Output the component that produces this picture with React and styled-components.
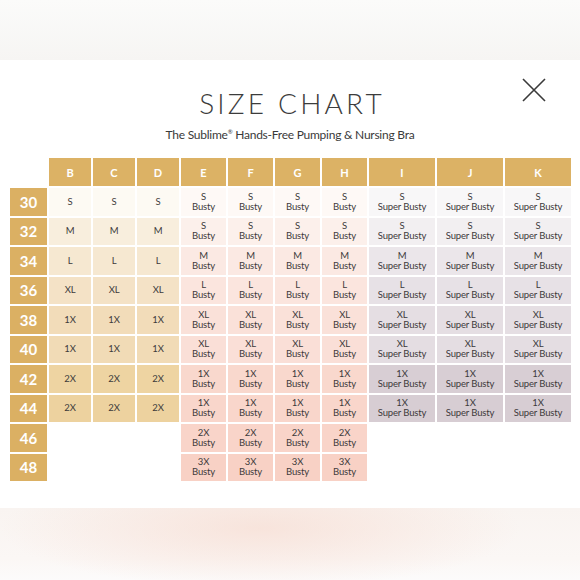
import React from "react";
import styled, { createGlobalStyle } from "styled-components";

const GlobalStyle = createGlobalStyle`
  html, body {
    margin: 0;
    padding: 0;
    background: #ffffff;
  }
  body {
    font-family: "Lato", "Open Sans", sans-serif;
  }
`;

const Page = styled.div`
  width: 580px;
  height: 580px;
  display: flex;
  flex-direction: column;
  overflow: hidden;
`;

const TopBand = styled.div`
  height: 60px;
  flex: none;
  background: linear-gradient(180deg, #fbfbfa 0%, #f6f5f3 100%);
`;

const BottomBand = styled.div`
  flex: 1;
  background:
    radial-gradient(ellipse 260px 60px at 260px 20px, rgba(247, 222, 212, 0.75), rgba(247, 222, 212, 0) 100%),
    linear-gradient(180deg, #f9f4f1 0%, #fbf7f5 70%, #fcfbfb 100%);
`;

const Panel = styled.div`
  position: relative;
  height: 448px;
  flex: none;
  background: #ffffff;
  display: flex;
  flex-direction: column;
  align-items: center;
  padding-top: 27px;
  box-sizing: border-box;
`;

const CloseButton = styled.button`
  position: absolute;
  top: 18px;
  right: 34px;
  width: 24px;
  height: 24px;
  padding: 0;
  border: none;
  background: none;
  cursor: pointer;
`;

const Title = styled.h1`
  margin: 0;
  font-family: "Lato", sans-serif;
  font-weight: 300;
  font-size: 28px;
  line-height: 32px;
  letter-spacing: 3.2px;
  color: #3c3c3c;
  padding-left: 4px;
`;

const Subtitle = styled.p`
  margin: 5px 0 0;
  font-family: "Lato", sans-serif;
  font-size: 12px;
  line-height: 16px;
  color: #3a3a3a;
  letter-spacing: -0.25px;

  sup {
    font-size: 6px;
    vertical-align: 5px;
  }
`;

const Grid = styled.div`
  margin-top: 15px;
  align-self: flex-start;
  margin-left: 10px;
  display: grid;
  grid-template-columns: 37px repeat(3, 42px) repeat(4, 45px) repeat(3, 66px);
  grid-template-rows: 28px repeat(10, 27.5px);
  gap: 2px;
`;

const Corner = styled.div``;

const HeadCell = styled.div`
  background: #dcb265;
  color: #ffffff;
  font-weight: 700;
  font-size: 11px;
  display: flex;
  align-items: center;
  justify-content: center;
`;

const RowLabel = styled.div`
  background: #dbb063;
  color: #ffffff;
  font-weight: 700;
  font-size: 15px;
  display: flex;
  align-items: center;
  justify-content: center;
`;

const Cell = styled.div`
  background: ${(p) => p.$bg};
  color: #3d3a3b;
  font-size: 9.5px;
  line-height: 10px;
  display: flex;
  flex-direction: column;
  align-items: center;
  justify-content: center;
  text-align: center;
  letter-spacing: -0.15px;
`;

const Empty = styled.div``;

const bands = [
  "30", "32", "34", "36", "38", "40", "42", "44", "46", "48",
];

const groups = [
  {
    cups: ["B", "C", "D"],
    sizes: ["S", "M", "L", "XL", "1X", "1X", "2X", "2X", null, null],
    label: null,
    colors: ["#fdfaf3", "#f8eedd", "#f6e8d1", "#f4e2c6", "#f2dcb9", "#f1dbb6", "#eed4a2", "#edd29f"],
  },
  {
    cups: ["E", "F", "G", "H"],
    sizes: ["S", "S", "M", "L", "XL", "XL", "1X", "1X", "2X", "3X"],
    label: "Busty",
    colors: ["#fef9f6", "#fcf0eb", "#fbe9e3", "#fbe5de", "#fae1d9", "#fadfd7", "#f9d8cd", "#f9d6cb", "#f9d4c9", "#f8d1c5"],
  },
  {
    cups: ["I", "J", "K"],
    sizes: ["S", "S", "M", "L", "XL", "XL", "1X", "1X", null, null],
    label: "Super Busty",
    colors: ["#f8f7f8", "#f2eff1", "#ebe6ea", "#e7e1e6", "#e5dee3", "#e4dde2", "#d8ced4", "#d7cdd3"],
  },
];

function CloseIcon() {
  return (
    <svg width="24" height="24" viewBox="0 0 24 24">
      <path d="M1 1 L23 23 M23 1 L1 23" stroke="#3a3a3a" strokeWidth="1.6" fill="none" />
    </svg>
  );
}

function SizeGrid() {
  return (
    <Grid>
      <Corner />
      {groups.map((g) => g.cups.map((c) => <HeadCell key={c}>{c}</HeadCell>))}
      {bands.map((band, r) => (
        <React.Fragment key={band}>
          <RowLabel>{band}</RowLabel>
          {groups.map((g) =>
            g.cups.map((c) => {
              const size = g.sizes[r];
              if (!size) return <Empty key={c} />;
              return (
                <Cell key={c} $bg={g.colors[r]}>
                  <span>{size}</span>
                  {g.label && <span>{g.label}</span>}
                </Cell>
              );
            })
          )}
        </React.Fragment>
      ))}
    </Grid>
  );
}

export default function App() {
  return (
    <>
      <GlobalStyle />
      <Page>
        <TopBand />
        <Panel>
          <CloseButton aria-label="Close">
            <CloseIcon />
          </CloseButton>
          <Title>SIZE CHART</Title>
          <Subtitle>
            The Sublime<sup>®</sup> Hands-Free Pumping &amp; Nursing Bra
          </Subtitle>
          <SizeGrid />
        </Panel>
        <BottomBand />
      </Page>
    </>
  );
}
